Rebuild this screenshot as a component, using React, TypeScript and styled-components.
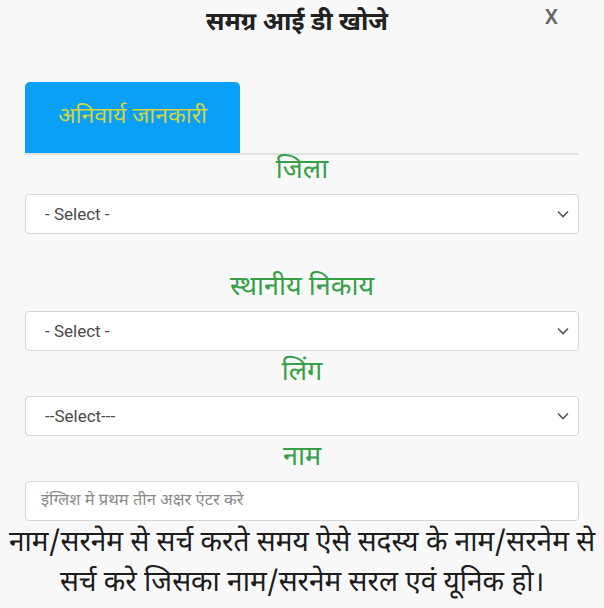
import React from 'react';
import styled, { createGlobalStyle } from 'styled-components';

const GlobalStyle = createGlobalStyle`
  html, body {
    margin: 0;
    padding: 0;
    background: #f8f8f8;
  }
  * {
    box-sizing: border-box;
  }
`;

const Page = styled.div`
  width: 604px;
  height: 608px;
  overflow: hidden;
  background: #f8f8f8;
  font-family: 'Noto Sans Devanagari', 'Noto Sans', Roboto, sans-serif;
  color: #222;
`;

const Header = styled.div`
  position: relative;
  height: 48px;
  display: flex;
  align-items: center;
  justify-content: center;
`;

const Title = styled.h2`
  margin: 0 0 0 -10px;
  font-size: 25px;
  font-weight: 700;
  color: #222;
`;

const Close = styled.span`
  position: absolute;
  right: 46px;
  top: 5px;
  font-family: Roboto, 'Liberation Sans', sans-serif;
  font-size: 21px;
  font-weight: 500;
  color: #666;
`;

const Body = styled.div`
  padding: 34px 25px 0 25px;
`;

const Tabs = styled.div`
  display: flex;
  border-bottom: 2px solid #e2e2e2;
`;

const Tab = styled.div`
  width: 215px;
  height: 71px;
  background: #0aa0f7;
  border-radius: 5px 5px 0 0;
  display: flex;
  align-items: center;
  justify-content: center;
  color: #d4d43c;
  font-size: 23px;
  padding-bottom: 2px;
`;

const Label = styled.div<{ $gap?: number }>`
  text-align: center;
  color: #36a048;
  font-size: 27px;
  line-height: 34px;
  margin-top: ${(p) => p.$gap ?? 0}px;
  margin-bottom: 5px;
`;

const Field = styled.div`
  position: relative;
  height: 40px;
  background: #fff;
  border: 1px solid #d6d6d6;
  border-radius: 4px;
  display: flex;
  align-items: center;
  padding: 0 19px;
  font-family: Roboto, 'Liberation Sans', sans-serif;
  font-size: 17px;
  color: #4a4a4a;
`;

const Placeholder = styled.span`
  font-family: 'Noto Sans Devanagari', 'Noto Sans', sans-serif;
  font-size: 16.5px;
  color: #8a8a8a;
  margin-left: -4px;
`;

const Chevron = styled.svg`
  position: absolute;
  right: 8px;
  top: 13px;
`;

const Note = styled.p`
  margin: 3px -25px 0;
  text-align: center;
  font-size: 28px;
  line-height: 40px;
  color: #1c1c1c;
`;

function Arrow() {
  return (
    <Chevron width="14" height="12" viewBox="0 0 14 12">
      <path d="M2 3.5 L7 8.5 L12 3.5" fill="none" stroke="#555" strokeWidth="1.6" />
    </Chevron>
  );
}

function SelectBox({ text }: { text: string }) {
  return (
    <Field>
      {text}
      <Arrow />
    </Field>
  );
}

export default function App() {
  return (
    <Page>
      <GlobalStyle />
      <Header>
        <Title>समग्र आई डी खोजे</Title>
        <Close>X</Close>
      </Header>
      <Body>
        <Tabs>
          <Tab>अनिवार्य जानकारी</Tab>
        </Tabs>
        <Label>जिला</Label>
        <SelectBox text="- Select -" />
        <Label $gap={38}>स्थानीय निकाय</Label>
        <SelectBox text="- Select -" />
        <Label $gap={6}>लिंग</Label>
        <SelectBox text="--Select---" />
        <Label $gap={6}>नाम</Label>
        <Field>
          <Placeholder>इंग्लिश मे प्रथम तीन अक्षर एंटर करे</Placeholder>
        </Field>
        <Note>
          नाम/सरनेम से सर्च करते समय ऐसे सदस्य के नाम/सरनेम से सर्च करे जिसका नाम/सरनेम सरल एवं यूनिक हो।
        </Note>
      </Body>
    </Page>
  );
}
